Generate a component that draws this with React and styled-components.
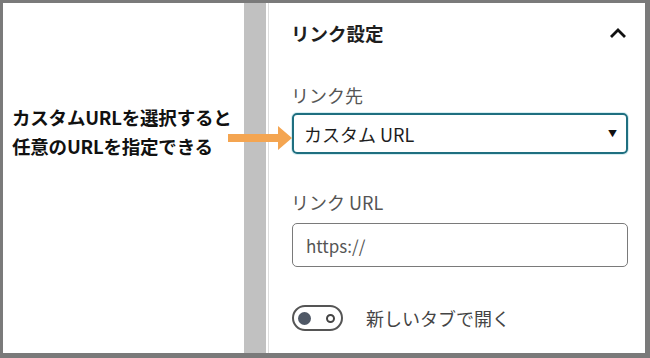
import styled, { createGlobalStyle } from "styled-components";

const GlobalStyle = createGlobalStyle`
  html, body {
    margin: 0;
    padding: 0;
    background: #ffffff;
  }
  body {
    font-family: "Noto Sans CJK JP", "Noto Sans", sans-serif;
  }
`;

const Frame = styled.div`
  position: relative;
  width: 650px;
  height: 358px;
  box-sizing: border-box;
  border-style: solid;
  border-color: #7a7a7a;
  border-width: 3px 5px 5px 3px;
  display: flex;
  background: #ffffff;
  overflow: hidden;
`;

const Note = styled.div`
  width: 241px;
  display: flex;
  flex-direction: column;
  padding: 100px 0 0 9px;
  box-sizing: border-box;
  color: #111111;
  font-weight: 700;
  font-size: 18.5px;
  line-height: 29px;
  letter-spacing: -0.2px;
  white-space: nowrap;
`;

const Gutter = styled.div`
  width: 22px;
  background: #c1c1c1;
  margin-right: 2px;
  flex-shrink: 0;
`;

const Panel = styled.div`
  flex: 1;
  border-left: 1px solid #dedede;
  padding: 16px 17px 0 23px;
  display: flex;
  flex-direction: column;
  color: #1e1e1e;
`;

const PanelHead = styled.div`
  display: flex;
  align-items: center;
  justify-content: space-between;
  height: 28px;
  margin-left: -1px;
  font-size: 18.5px;
  font-weight: 700;
`;

const Label = styled.div`
  font-size: 18px;
  color: #555555;
  margin-top: ${(p) => p.$top}px;
  margin-left: -1px;
  line-height: 26px;
`;

const Box = styled.div`
  margin-top: ${(p) => p.$top}px;
  height: ${(p) => p.$h}px;
  box-sizing: border-box;
  border: ${(p) => (p.$focus ? "2px solid #1f6f80" : "1px solid #7a7a7a")};
  border-radius: 5px;
  display: flex;
  align-items: center;
  justify-content: space-between;
  padding: 0 ${(p) => (p.$focus ? 9 : 12)}px 0 ${(p) => (p.$focus ? 10 : 13)}px;
  font-size: ${(p) => (p.$focus ? 18 : 17)}px;
  color: ${(p) => (p.$focus ? "#1e1e1e" : "#555555")};
  box-shadow: ${(p) => (p.$focus ? "0 0 0 1px #d6eef2" : "none")};
`;

const Caret = styled.span`
  font-size: 9px;
  color: #111111;
`;

const ToggleRow = styled.div`
  display: flex;
  align-items: center;
  gap: 23px;
  margin-top: 38px;
  font-size: 18px;
  color: #444444;
`;

const Toggle = styled.div`
  width: 51px;
  height: 26px;
  box-sizing: border-box;
  border: 2.5px solid #555555;
  border-radius: 13px;
  display: flex;
  align-items: center;
  justify-content: space-between;
  padding: 0 6px 0 4px;
`;

const Knob = styled.span`
  width: 13px;
  height: 13px;
  border-radius: 50%;
  background: #4f5866;
`;

const Ring = styled.span`
  width: 5px;
  height: 5px;
  border-radius: 50%;
  border: 2px solid #444444;
`;

const Arrow = styled.svg`
  position: absolute;
  left: 225px;
  top: 121px;
`;

export default function App() {
  return (
    <>
      <GlobalStyle />
      <Frame>
        <Note>
          <div>カスタムURLを選択すると</div>
          <div>任意のURLを指定できる</div>
        </Note>
        <Gutter />
        <Panel>
          <PanelHead>
            <span>リンク設定</span>
            <svg width="20" height="14" viewBox="0 0 20 14">
              <path d="M3 11 L10 4 L17 11" fill="none" stroke="#111" strokeWidth="2.8" />
            </svg>
          </PanelHead>
          <Label $top={35}>リンク先</Label>
          <Box $top={5} $h={41} $focus>
            <span>カスタム URL</span>
            <Caret>▼</Caret>
          </Box>
          <Label $top={35}>リンク URL</Label>
          <Box $top={8} $h={44}>
            <span>https://</span>
          </Box>
          <ToggleRow>
            <Toggle>
              <Knob />
              <Ring />
            </Toggle>
            <span>新しいタブで開く</span>
          </ToggleRow>
        </Panel>
        <Arrow width="70" height="30" viewBox="0 0 70 30">
          <path d="M0 10 L50 10 L50 2 L64 14 L50 26 L50 18 L0 18 Z" fill="#f4a551" />
        </Arrow>
      </Frame>
    </>
  );
}
